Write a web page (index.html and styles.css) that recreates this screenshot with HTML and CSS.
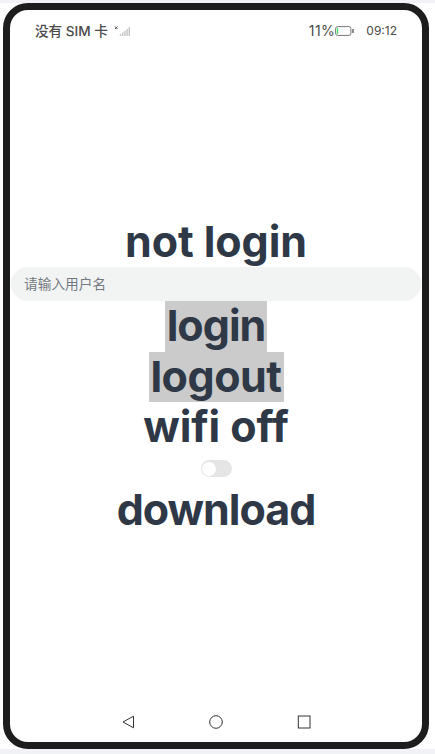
FILE: index.html
```html
<!DOCTYPE html>
<html lang="zh-CN">
<head>
<meta charset="utf-8">
<title>Device preview</title>
<link rel="stylesheet" href="styles.css">
</head>
<body>
<div class="phone">
  <header class="status">
    <span class="carrier">没有 SIM 卡</span>
    <svg class="signal" width="17" height="12" viewBox="0 0 17 12">
      <path d="M1 1.5l2.5 2.5M3.5 1.5L1 4" stroke="#555" stroke-width="1" fill="none"/>
      <path d="M6.5 11v-2M8.7 11v-3.5M10.9 11v-5M13.1 11v-7M15.3 11v-9" stroke="#c4c4c4" stroke-width="1.4"/>
    </svg>
    <span class="percent">11%</span>
    <svg class="battery" width="20" height="10" viewBox="0 0 20 10">
      <rect x=".6" y=".6" width="15.3" height="8.8" rx="2" fill="none" stroke="#777"/>
      <path d="M2.5 2v6" stroke="#4be060" stroke-width="1.4"/>
      <path d="M18 3v4" stroke="#666" stroke-width="1.5"/>
    </svg>
    <span class="time">09:12</span>
  </header>
  <main class="content">
    <div class="label not-login">not login</div>
    <input class="user" type="text" placeholder="请输入用户名">
    <div class="label action login"><span>login</span></div>
    <div class="label action logout"><span>logout</span></div>
    <div class="label wifi">wifi off</div>
    <div class="toggle"></div>
    <div class="label download">download</div>
  </main>
  <nav class="nav">
    <svg width="14" height="14" viewBox="0 0 14 14"><path d="M12.5 1.2v11.6L2 7z"/></svg>
    <svg width="14" height="14" viewBox="0 0 14 14"><circle cx="7" cy="7" r="6.3"/></svg>
    <svg width="14" height="14" viewBox="0 0 14 14"><rect x="1.3" y="1" width="11.7" height="12"/></svg>
  </nav>
</div>
</body>
</html>
```
FILE: styles.css
```css
* { box-sizing: border-box; }
body {
  margin: 0;
  height: 754px;
  padding: 3px 5px 5px 3px;
  background: linear-gradient(#f1f2f5 3px, #fff 3px, #fff 749px, #f1f2f5 749px);
  font-family: Inter, "Noto Sans CJK SC", sans-serif;
  overflow: hidden;
}
.phone {
  width: 426px;
  height: 746px;
  border: 7px solid #1d1d1d;
  border-radius: 25px;
  background: #fff;
  display: flex;
  flex-direction: column;
}
.status {
  height: 41px;
  padding: 0 25px;
  display: flex;
  align-items: center;
  color: #4a4a4a;
  line-height: 20px;
}
.carrier { font-weight: 500; font-size: 13.6px; white-space: nowrap; }
.signal { margin-left: 6px; }
.percent { margin-left: auto; font-size: 14px; letter-spacing: 0.5px; }
.battery { margin-left: 0; }
.time { margin-left: 11px; font-size: 12px; }
.content {
  flex: 1;
  padding-top: 166px;
  display: flex;
  flex-direction: column;
  align-items: center;
}
.label {
  height: 50.3px;
  line-height: 48px;
  font-size: 43px;
  font-weight: 700;
  letter-spacing: -0.5px;
  color: #2e3846;
  white-space: nowrap;
}
.not-login { letter-spacing: -0.1px; }
.wifi { letter-spacing: -0.1px; }
.download { letter-spacing: -1px; }
.user {
  width: 410px;
  height: 34px;
  flex: none;
  margin: 0;
  padding: 0 13px 2px;
  border: 0;
  border-radius: 17px;
  background: #f2f4f4;
  font: 13.7px "Noto Sans CJK SC", sans-serif;
}
.user::placeholder { color: #727980; opacity: 1; }
.action { background: #cbcbcb; text-align: center; }
.login { width: 102px; letter-spacing: -1px; }
.logout { width: 135px; }
.toggle {
  width: 31px;
  height: 17px;
  margin: 8px 0;
  padding: 1.5px;
  border-radius: 9px;
  background: #e5e5e5;
}
.toggle::before {
  content: "";
  display: block;
  width: 14px;
  height: 14px;
  border-radius: 50%;
  background: #fff;
}
.nav {
  height: 42px;
  padding: 1px 111px 0 111px;
  display: flex;
  justify-content: space-between;
  align-items: center;
}
.nav svg { fill: none; stroke: #333; stroke-width: 1; }
```
